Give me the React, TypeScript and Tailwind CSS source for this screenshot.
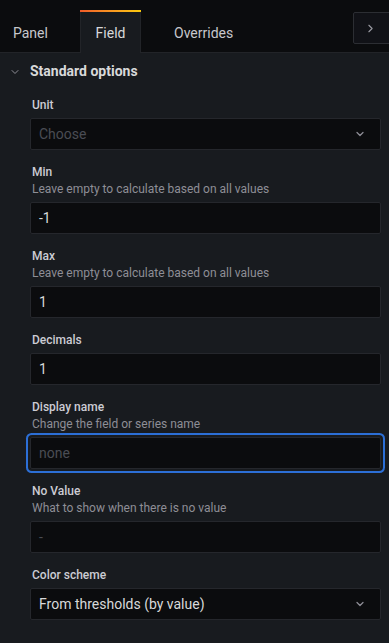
import { ChevronDown, ChevronRight } from "lucide-react";

type Field = {
  label: string;
  desc?: string;
  value?: string;
  placeholder?: string;
  select?: boolean;
  focused?: boolean;
};

const FIELDS: Field[] = [
  { label: "Unit", placeholder: "Choose", select: true },
  { label: "Min", desc: "Leave empty to calculate based on all values", value: "-1" },
  { label: "Max", desc: "Leave empty to calculate based on all values", value: "1" },
  { label: "Decimals", value: "1" },
  { label: "Display name", desc: "Change the field or series name", placeholder: "none", focused: true },
  { label: "No Value", desc: "What to show when there is no value", placeholder: "-" },
  { label: "Color scheme", value: "From thresholds (by value)", select: true },
];

function Input({ f }: { f: Field }) {
  return (
    <div
      className={
        "h-8 rounded-[2px] border border-[#25272c] bg-[#0b0c0e] flex items-center pl-2 pr-[14px] " +
        (f.focused ? "shadow-[0_0_0_2px_#181b1f,0_0_0_4px_#2c6fd6]" : "")
      }
    >
      <span className={"flex-1 text-[14px] " + (f.value ? "text-[#d8d9da]" : "text-[#4a4d54]")}>
        {f.value ?? f.placeholder}
      </span>
      {f.select && <ChevronDown size={12} strokeWidth={2.5} className="text-[#8e8e96]" />}
    </div>
  );
}

export default function App() {
  return (
    <div className="w-[389px] h-[643px] bg-[#181b1f] overflow-hidden font-['Roboto',sans-serif]">
      <div className="h-[53px] bg-[#0b0c0e] border-b border-[#222428] flex items-end relative">
        <div className="flex items-end h-[41px]">
          <div className="w-[80px] h-full pl-[13px] pt-[4px] flex items-center text-[14px] text-[#c7c7cc]">Panel</div>
          <div className="relative w-[61px] h-[42px] -mb-px pt-[3px] bg-[#181b1f] border-x border-[#222428] flex items-center justify-center text-[14px] text-[#d8d9da]">
            <div className="absolute -top-px -left-px -right-px h-[2px] bg-gradient-to-r from-[#f05a28] to-[#fbca0a]" />
            Field
          </div>
          <div className="h-full pl-[33px] pt-[4px] flex items-center text-[14px] text-[#c7c7cc]">Overrides</div>
        </div>
        <div className="absolute left-[353px] top-[12px] w-[40px] h-[32px] rounded-[2px] border border-[#2c2e33] bg-[#111217] flex items-center pl-[10px]">
          <ChevronRight size={13} strokeWidth={2} className="text-[#9a9aa2]" />
        </div>
      </div>
      <div className="h-[37px] flex items-center pl-[9px]">
        <ChevronDown size={12} strokeWidth={2} className="text-[#8e8e96]" />
        <span className="ml-[9px] text-[14px] font-bold text-[#d8d9da]">Standard options</span>
      </div>
      <div className="pl-[30px] pr-[8px] pt-[7px] flex flex-col gap-[14px]">
        {FIELDS.map((f) => (
          <div key={f.label}>
            <div className="pl-[2px] text-[12px] leading-4 font-medium text-[#ccccd4]">{f.label}</div>
            {f.desc && <div className="pl-[2px] text-[12px] leading-4 mt-px text-[#8e8e96]">{f.desc}</div>}
            <div className="mt-[5px]">
              <Input f={f} />
            </div>
          </div>
        ))}
      </div>
    </div>
  );
}
